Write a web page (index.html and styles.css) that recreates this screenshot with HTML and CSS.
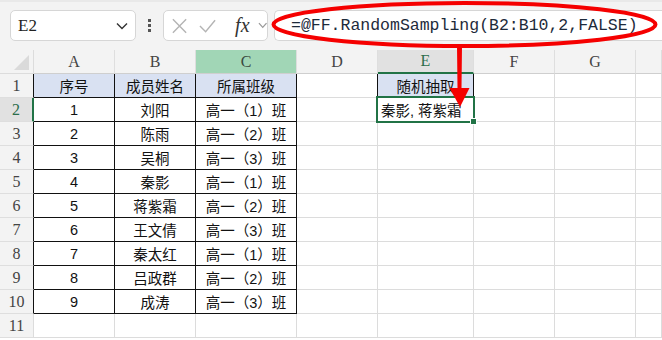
FILE: index.html
```html
<!DOCTYPE html>
<html>
<head>
    <meta charset="utf-8">
    <link rel="stylesheet" href="styles.css">
</head>
<body>

<div class="bar">
    <div class="namebox">
        <span>E2</span>
        <svg width="12" height="8" viewBox="0 0 12 8"><path d="M1 1.5 L6 6.5 L11 1.5" fill="none" stroke="#333" stroke-width="1.4"/></svg>
    </div>
    <div class="dots"><i></i><i></i><i></i></div>
    <div class="fxbox">
        <svg width="18" height="18" viewBox="0 0 18 18"><path d="M2 2 L16 16 M16 2 L2 16" stroke="#b4b4b4" stroke-width="1.5"/></svg>
        <svg width="18" height="18" viewBox="0 0 18 18"><path d="M1 9 L7 15 L17 3" fill="none" stroke="#b4b4b4" stroke-width="1.5"/></svg>
        <span class="fx">fx</span>
        <svg width="10" height="7" viewBox="0 0 10 7"><path d="M1 1 L5 5.5 L9 1" fill="none" stroke="#999" stroke-width="1.3"/></svg>
    </div>
    <div class="formula">=@FF.RandomSampling(B2:B10,2,FALSE)</div>
</div>

<div class="sheet">
    <div class="corner"></div>
    <div class="ch">A</div><div class="ch">B</div><div class="ch sel-col">C</div><div class="ch">D</div>
    <div class="ch act-col">E</div><div class="ch">F</div><div class="ch">G</div><div class="ch"></div>

    <div class="rh tb">1</div>
    <div class="c t hd">序号</div><div class="c t hd">成员姓名</div><div class="c t hd">所属班级</div>
    <div class="c tl"></div><div class="c t hd">随机抽取</div><div class="c"></div><div class="c"></div><div class="c"></div>

    <div class="rh tb act-row">2</div>
    <div class="c t">1</div><div class="c t">刘阳</div><div class="c t">高一（1）班</div>
    <div class="c"></div><div class="c active">秦影, 蒋紫霜</div><div class="c"></div><div class="c"></div><div class="c"></div>

    <div class="rh tb">3</div>
    <div class="c t">2</div><div class="c t">陈雨</div><div class="c t">高一（2）班</div>
    <div class="c"></div><div class="c"></div><div class="c"></div><div class="c"></div><div class="c"></div>

    <div class="rh tb">4</div>
    <div class="c t">3</div><div class="c t">吴桐</div><div class="c t">高一（3）班</div>
    <div class="c"></div><div class="c"></div><div class="c"></div><div class="c"></div><div class="c"></div>

    <div class="rh tb">5</div>
    <div class="c t">4</div><div class="c t">秦影</div><div class="c t">高一（1）班</div>
    <div class="c"></div><div class="c"></div><div class="c"></div><div class="c"></div><div class="c"></div>

    <div class="rh tb">6</div>
    <div class="c t">5</div><div class="c t">蒋紫霜</div><div class="c t">高一（2）班</div>
    <div class="c"></div><div class="c"></div><div class="c"></div><div class="c"></div><div class="c"></div>

    <div class="rh tb">7</div>
    <div class="c t">6</div><div class="c t">王文倩</div><div class="c t">高一（3）班</div>
    <div class="c"></div><div class="c"></div><div class="c"></div><div class="c"></div><div class="c"></div>

    <div class="rh tb">8</div>
    <div class="c t">7</div><div class="c t">秦太红</div><div class="c t">高一（1）班</div>
    <div class="c"></div><div class="c"></div><div class="c"></div><div class="c"></div><div class="c"></div>

    <div class="rh tb">9</div>
    <div class="c t">8</div><div class="c t">吕政群</div><div class="c t">高一（2）班</div>
    <div class="c"></div><div class="c"></div><div class="c"></div><div class="c"></div><div class="c"></div>

    <div class="rh tb">10</div>
    <div class="c t">9</div><div class="c t">成涛</div><div class="c t">高一（3）班</div>
    <div class="c"></div><div class="c"></div><div class="c"></div><div class="c"></div><div class="c"></div>

    <div class="rh">11</div>
    <div class="c"></div><div class="c"></div><div class="c"></div>
    <div class="c"></div><div class="c"></div><div class="c"></div><div class="c"></div><div class="c"></div>
</div>

<!-- red callout drawn over the formula bar -->
<svg class="callout" width="662" height="130" viewBox="0 0 662 130">
    <ellipse cx="464.5" cy="24.5" rx="191" ry="21.5" fill="none" stroke="#f50000" stroke-width="4"/>
    <path d="M457 46 L462 46 L461.5 88 L469.5 88 L460 107 L449.5 88 L457.5 88 Z" fill="#f50000"/>
</svg>

</body>
</html>
```

FILE: styles.css
```css
html, body {
    margin: 0;
    padding: 0;
}
body {
    width: 662px;
    height: 340px;
    overflow: hidden;
    background: #fff;
    position: relative;
    font-family: "Liberation Sans", "Noto Sans CJK SC", sans-serif;
}

/* formula bar */
.bar {
    height: 50px;
    background: #f3f3f3;
    display: flex;
    align-items: flex-start;
    padding: 8px 0 0 10px;
    box-sizing: border-box;
    border-top: 2px solid #e9e9e9;
}
.bar > div {
    flex: none;
}
.namebox, .fxbox, .formula {
    height: 31px;
    box-sizing: border-box;
    background: #fff;
    border: 1px solid #d6d6d6;
    border-radius: 5px;
    display: flex;
    align-items: center;
}
.namebox {
    width: 126px;
    padding: 0 7px 0 7px;
    justify-content: space-between;
    font-family: "Liberation Serif", serif;
    font-size: 17px;
    color: #222;
}
.dots {
    width: 27px;
    height: 31px;
    display: flex;
    flex-direction: column;
    align-items: center;
    justify-content: center;
    gap: 2px;
}
.dots i {
    width: 3px;
    height: 3px;
    background: #555;
}
.fxbox {
    width: 105px;
    padding: 0 0 0 7px;
    gap: 11px;
}
.fxbox .fx {
    font-family: "Liberation Serif", serif;
    font-style: italic;
    font-size: 20px;
    color: #333;
    margin-left: 8px;
    margin-right: -3px;
}
.bar .formula {
    flex: 1;
    margin-left: 6px;
    padding-left: 16px;
    font-family: "Liberation Mono", monospace;
    font-size: 16.5px;
    color: #1d2a3a;
    border-right: none;
    border-radius: 5px 0 0 5px;
    white-space: nowrap;
}

/* sheet */
.sheet {
    display: grid;
    grid-template-columns: 34px 81px 81px 101px 81px 96px 81px 81px 1fr;
    grid-auto-rows: 24px;
    font-size: 14.5px;
}
.sheet > div {
    box-sizing: border-box;
    border-right: 1px solid #dcdcdc;
    border-bottom: 1px solid #dcdcdc;
    display: flex;
    align-items: center;
    justify-content: center;
    white-space: nowrap;
    color: #111;
}
.corner {
    background: #f3f3f3;
    position: relative;
}
.corner::after {
    content: "";
    position: absolute;
    right: 4px;
    bottom: 3px;
    border-style: solid;
    border-width: 0 0 15px 15px;
    border-color: transparent transparent #dadada transparent;
}
.sheet .ch {
    background: #f3f3f3;
    font-family: "Liberation Serif", serif;
    font-size: 16px;
    color: #444;
    border-bottom-color: #cfcfcf;
    border-right-color: #dedede;
}
.sheet .ch.sel-col {
    background: #a1d6b6;
    color: #3a4a40;
}
.sheet .ch.act-col {
    background: #e1e1e1;
    color: #2a6e4a;
    border-bottom: 2px solid #217346;
}
.sheet .rh {
    background: #f3f3f3;
    font-family: "Liberation Serif", serif;
    font-size: 16px;
    color: #444;
    border-bottom-color: #dedede;
}
.sheet .rh.tb {
    border-right-color: #111;
}
.sheet .rh.act-row {
    background: #e1e1e1;
    color: #2a6e4a;
    border-right: 2px solid #217346;
}
.sheet .t {
    border-right-color: #111;
    border-bottom-color: #111;
}
.sheet .tl {
    border-right-color: #111;
}
.sheet .hd {
    background: #d9e1f2;
}
.sheet .active {
    justify-content: flex-start;
    padding-left: 3px;
    position: relative;
}
.sheet .active::before {
    content: "";
    position: absolute;
    left: -2px;
    top: -2px;
    right: -2px;
    bottom: -2px;
    border: 2px solid #217346;
}
.sheet .active::after {
    content: "";
    position: absolute;
    right: -4px;
    bottom: -4px;
    width: 5px;
    height: 5px;
    background: #217346;
    border: 1px solid #fff;
}

.callout {
    position: absolute;
    left: 0;
    top: 0;
}
```
